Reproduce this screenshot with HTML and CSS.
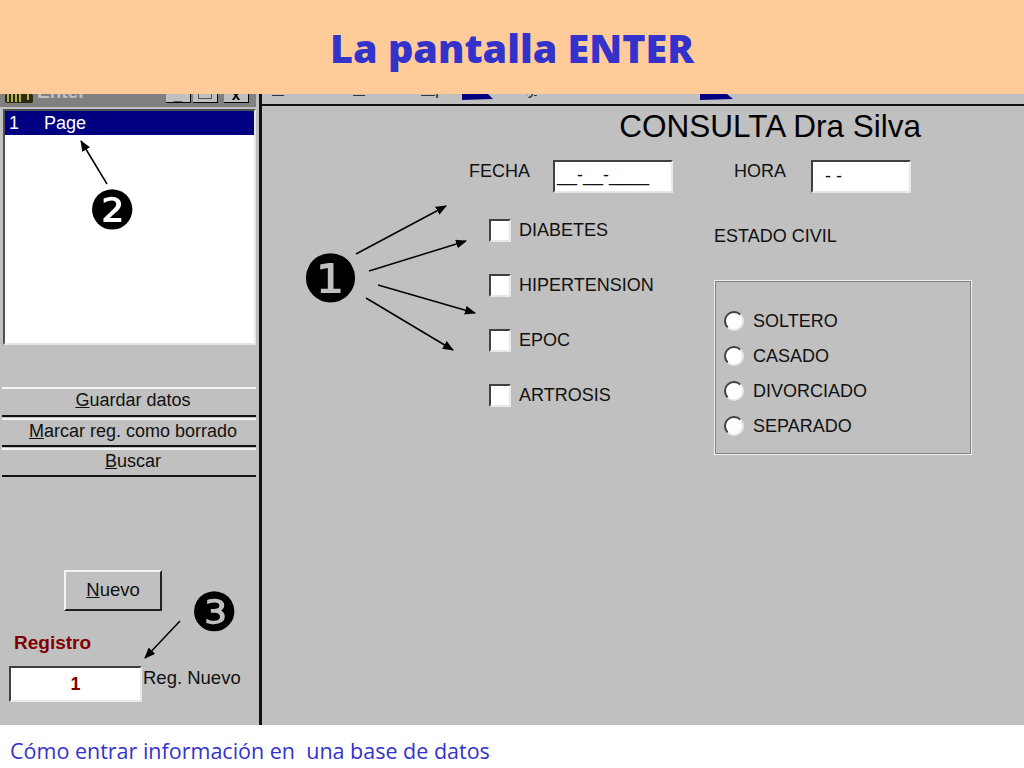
FILE: index.html
```html
<!DOCTYPE html>
<html lang="es">

<head>
    <meta charset="UTF-8">
    <meta name="viewport" content="width=device-width, initial-scale=1.0">
    <title>La pantalla ENTER</title>
    <link rel="stylesheet" href="styles.css">
</head>

<body>
    <div class="slide">
        <!-- Slide title -->
        <header class="slide-title">
            <h1>La pantalla ENTER</h1>
        </header>

        <!-- Application screenshot -->
        <main class="app">
            <aside class="side">
                <div class="titlebar">
                    <svg class="app-icon" width="28" height="9" viewBox="0 0 28 9">
                        <rect width="28" height="9" rx="2" fill="#2a2a10"/>
                        <path d="M3 0v8M7 0v8M11 0v8M15 0v8M23 0v6" stroke="#b8b04a" stroke-width="2"/>
                    </svg>
                    <span class="titlebar-text">Enter</span>
                    <div class="win-btns">
                        <span class="win-btn">_</span>
                        <span class="win-btn"><i class="win-restore"></i></span>
                        <span class="win-btn win-close">x</span>
                    </div>
                </div>
                <div class="page-list">
                    <div class="page-row"><span class="page-num">1</span><span>Page</span></div>
                </div>
                <div class="action-btns">
                    <button class="action-btn"><u>G</u>uardar datos</button>
                    <button class="action-btn"><u>M</u>arcar reg. como borrado</button>
                    <button class="action-btn"><u>B</u>uscar</button>
                </div>
                <button class="new-btn"><u>N</u>uevo</button>
                <div class="reg-label">Registro</div>
                <div class="reg-row">
                    <div class="reg-input">1</div>
                    <span class="reg-note">Reg. Nuevo</span>
                </div>
            </aside>

            <section class="form">
                <div class="menu">
                    <span class="menu-item"><u>A</u>rchivo</span>
                    <span class="menu-item"><u>E</u>ditar</span>
                    <span class="menu-item"><u>O</u>pción</span>
                    <span class="menu-item menu-last">A<u>y</u>uda</span>
                </div>
                <h2 class="form-title">CONSULTA Dra Silva</h2>
                <div class="date-row">
                    <span class="field-label">FECHA</span>
                    <div class="masked date-mask">__-__-____</div>
                    <span class="field-label hora-label">HORA</span>
                    <div class="masked hora-mask">- -</div>
                </div>
                <div class="form-body">
                    <div class="checks">
                        <label class="check"><span class="box"></span>DIABETES</label>
                        <label class="check"><span class="box"></span>HIPERTENSION</label>
                        <label class="check"><span class="box"></span>EPOC</label>
                        <label class="check"><span class="box"></span>ARTROSIS</label>
                    </div>
                    <div class="civil">
                        <div class="civil-title">ESTADO CIVIL</div>
                        <div class="radio-group">
                            <label class="radio"><span class="dot"></span>SOLTERO</label>
                            <label class="radio"><span class="dot"></span>CASADO</label>
                            <label class="radio"><span class="dot"></span>DIVORCIADO</label>
                            <label class="radio"><span class="dot"></span>SEPARADO</label>
                        </div>
                    </div>
                </div>
            </section>
        </main>

        <footer class="slide-foot">Cómo entrar información en&nbsp; una base de datos</footer>

        <!-- Callouts drawn over the screenshot -->
        <span class="callout callout-1">❶</span>
        <span class="callout callout-2">❷</span>
        <span class="callout callout-3">❸</span>
        <svg class="arrows" width="1024" height="768" viewBox="0 0 1024 768">
            <defs>
                <marker id="head" markerWidth="11" markerHeight="9" refX="10" refY="4.5" orient="auto" markerUnits="userSpaceOnUse">
                    <path d="M0 0L11 4.5L0 9z" fill="#000"/>
                </marker>
            </defs>
            <!-- blue scraps of the toolbar peeking out under the title -->
            <path d="M462 94H488L493 99L462 100z" fill="#000080"/>
            <path d="M700 94H727L733 99L700 100z" fill="#000080"/>
            <g stroke="#000" stroke-width="1.5" marker-end="url(#head)">
                <line x1="356" y1="254" x2="446" y2="206"/>
                <line x1="369" y1="271" x2="466" y2="241"/>
                <line x1="378" y1="285" x2="475" y2="313"/>
                <line x1="366" y1="298" x2="453" y2="350"/>
                <line x1="107" y1="184" x2="81" y2="141"/>
                <line x1="180" y1="621" x2="145" y2="658"/>
            </g>
        </svg>
    </div>
</body>

</html>
```

FILE: styles.css
```css
/* Global Styles */
body {
    margin: 0;
    background-color: #fff;
    font-family: "Liberation Sans", Arial, sans-serif;
}

.slide {
    position: relative;
    display: flex;
    flex-direction: column;
    width: 1024px;
    height: 768px;
    overflow: hidden;
}

/* Slide title */
.slide-title {
    flex: 0 0 94px;
    position: relative;
    z-index: 2;
    background: #ffcc99;
    text-align: center;
}

.slide-title h1 {
    margin: 0;
    padding-top: 24px;
    font-family: "Open Sans", sans-serif;
    font-size: 39.5px;
    line-height: 48px;
    font-weight: 800;
    color: #3333cc;
}

/* Screenshot */
.app {
    flex: 0 0 631px;
    display: flex;
    background: #c0c0c0;
    color: #111;
}

.side {
    flex: 0 0 259px;
    box-sizing: border-box;
    display: flex;
    flex-direction: column;
    padding: 0 3px 0 2px;
}

/* Title bar, mostly behind the slide title */
.titlebar {
    display: flex;
    align-items: flex-start;
    height: 13px;
    margin: 0 0 2px -2px;
    padding: 0 5px;
    background: #808080;
}

.app-icon {
    flex: none;
}

.titlebar-text {
    margin: -13px 0 0 4px;
    font-size: 19px;
    line-height: 22px;
    font-weight: 700;
    color: #c0c0c0;
}

.win-btns {
    display: flex;
    gap: 2px;
    margin-left: auto;
    margin-right: 2px;
}

.win-btn {
    display: flex;
    justify-content: center;
    width: 24px;
    height: 8px;
    background: #c0c0c0;
    border-right: 1px solid #000;
    border-bottom: 1px solid #000;
    font-size: 15px;
    line-height: 1px;
    font-weight: 700;
    color: #000;
}

.win-restore {
    display: block;
    width: 12px;
    height: 4px;
    border: 1px solid #555;
    border-top: 0;
}

.win-close {
    margin-left: 4px;
}

.page-list {
    box-sizing: border-box;
    height: 236px;
    margin-left: 1px;
    background: #fff;
    border: 2px solid;
    border-left-color: #505050;
    border-top-color: #505050;
    border-right-color: #e8e8e8;
    border-bottom-color: #e8e8e8;
}

.page-row {
    display: flex;
    height: 24px;
    padding-left: 4px;
    background: #000080;
    color: #fff;
    font-size: 18px;
    line-height: 25px;
}

.page-num {
    width: 35px;
}

.action-btns {
    display: flex;
    flex-direction: column;
    gap: 1px;
    margin-top: 42px;
}

.action-btn {
    height: 29px;
    padding: 0 0 3px 8px;
    background: #c0c0c0;
    border: 0;
    border-top: 2px solid #f4f4f4;
    border-bottom: 2px solid #111;
    font-family: "Liberation Sans", Arial, sans-serif;
    font-size: 18px;
    color: #111;
}

.action-btn:first-child {
    height: 30px;
}

.new-btn {
    width: 98px;
    height: 41px;
    margin: 93px 0 0 62px;
    padding: 0 0 2px;
    background: #c0c0c0;
    border: 2px solid;
    border-color: #f4f4f4 #222 #222 #f4f4f4;
    font-family: "Liberation Sans", Arial, sans-serif;
    font-size: 18.5px;
    color: #111;
}

.reg-label {
    margin: 21px 0 0 12px;
    font-size: 19px;
    line-height: 22px;
    font-weight: 700;
    color: #800000;
}

.reg-row {
    display: flex;
    margin: 12px 0 0 7px;
}

.reg-input {
    box-sizing: border-box;
    width: 133px;
    height: 36px;
    background: #fff;
    border: 2px solid;
    border-color: #404040 #e8e8e8 #e8e8e8 #404040;
    text-align: center;
    font-size: 18px;
    font-weight: 700;
    line-height: 33px;
    color: #800000;
}

.reg-note {
    margin-left: 1px;
    font-size: 18.5px;
    line-height: 24px;
}

/* Form */
.form {
    flex: 1;
    position: relative;
    border-left: 3px solid #111;
}

.menu {
    display: flex;
    align-items: flex-start;
    gap: 21px;
    height: 10px;
    padding-left: 10px;
    border-bottom: 2px solid #111;
    font-size: 18px;
}

.menu-item {
    display: block;
    margin-top: -16px;
    line-height: 20px;
    color: #333;
}

.menu-last {
    margin-left: 17px;
}

.form-title {
    margin: 0;
    padding: 2px 103px 0 0;
    height: 39px;
    box-sizing: border-box;
    text-align: right;
    font-size: 31.5px;
    line-height: 36px;
    font-weight: 400;
    color: #000;
}

.date-row {
    display: flex;
    align-items: flex-start;
    margin: 15px 0 0 207px;
}

.field-label,
.check,
.civil-title,
.radio {
    font-size: 18px;
}

.field-label {
    line-height: 22px;
}

.masked {
    box-sizing: border-box;
    height: 33px;
    background: #fff;
    border: 2px solid;
    border-color: #404040 #e8e8e8 #e8e8e8 #404040;
    font-size: 18px;
    padding-left: 2px;
}

.date-mask {
    width: 120px;
    margin-left: 23px;
    line-height: 27px;
}

.hora-label {
    margin-left: 61px;
}

.hora-mask {
    width: 100px;
    margin-left: 25px;
    padding-left: 12px;
    line-height: 29px;
}

.form-body {
    display: flex;
    margin: 26px 0 0 227px;
}

.checks {
    display: flex;
    flex-direction: column;
    gap: 33.3px;
    width: 225px;
}

.check {
    display: flex;
    align-items: center;
    gap: 8px;
    height: 22px;
}

.box {
    box-sizing: border-box;
    width: 22px;
    height: 23px;
    background: #fff;
    border: 2px solid;
    border-color: #404040 #e8e8e8 #e8e8e8 #404040;
}

.civil-title {
    margin-top: 5px;
    line-height: 24px;
}

.radio-group {
    box-sizing: border-box;
    display: flex;
    flex-direction: column;
    gap: 13px;
    width: 256px;
    height: 173px;
    margin: 33px 0 0 1px;
    padding: 28px 0 0 8px;
    border: 1px solid #808080;
    outline: 1px solid #f0f0f0;
}

.radio {
    display: flex;
    align-items: center;
    gap: 9px;
    height: 22px;
}

.dot {
    box-sizing: border-box;
    width: 20px;
    height: 20px;
    background: #fff;
    border: 2px solid;
    border-color: #404040 #e8e8e8 #e8e8e8 #404040;
    border-radius: 50%;
}

/* Footer line */
.slide-foot {
    flex: 1;
    padding: 12px 0 0 10px;
    font-family: "Open Sans", sans-serif;
    font-size: 21.5px;
    line-height: 28px;
    color: #3333cc;
}

/* Callouts */
.callout {
    position: absolute;
    font-family: "DejaVu Sans", sans-serif;
    color: #000;
}

.callout-1 {
    left: 301px;
    top: 247px;
    font-size: 66px;
    line-height: 66px;
}

.callout-2 {
    left: 88px;
    top: 184px;
    font-size: 54px;
    line-height: 54px;
}

.callout-3 {
    left: 190px;
    top: 586px;
    font-size: 54px;
    line-height: 54px;
}

.arrows {
    position: absolute;
    left: 0;
    top: 0;
    pointer-events: none;
}
```
